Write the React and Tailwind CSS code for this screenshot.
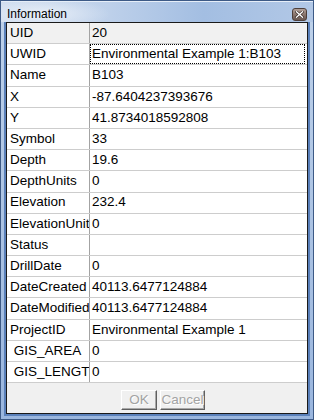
import React from "react";

const rows = [
  ["UID", "20"],
  ["UWID", "Environmental Example 1:B103"],
  ["Name", "B103"],
  ["X", "-87.6404237393676"],
  ["Y", "41.8734018592808"],
  ["Symbol", "33"],
  ["Depth", "19.6"],
  ["DepthUnits", "0"],
  ["Elevation", "232.4"],
  ["ElevationUnit", "0"],
  ["Status", ""],
  ["DrillDate", "0"],
  ["DateCreated", "40113.6477124884"],
  ["DateModified", "40113.6477124884"],
  ["ProjectID", "Environmental Example 1"],
  [" GIS_AREA", "0"],
  [" GIS_LENGT", "0"],
];

function CloseButton() {
  return (
    <div className="w-[15px] h-[13px] rounded-[3px] border border-[#4e3f3a] bg-[linear-gradient(180deg,#b3a199_0%,#8a766e_50%,#6a5852_100%)] flex items-center justify-center">
      <svg width="9" height="7" viewBox="0 0 9 7">
        <path d="M1.5 0.8 L7.5 6.2 M7.5 0.8 L1.5 6.2" stroke="#3a2c28" strokeWidth="2.6" strokeLinecap="square" />
        <path d="M1.5 0.8 L7.5 6.2 M7.5 0.8 L1.5 6.2" stroke="#ffffff" strokeWidth="1.4" strokeLinecap="square" />
      </svg>
    </div>
  );
}

function Btn({ label, w }) {
  return (
    <div
      className={`${w} h-[20px] border-t border-l border-t-white border-l-white border-r border-b border-r-[#5f5f5f] border-b-[#5f5f5f] shadow-[inset_-1px_-1px_0_#a8a8a8] flex items-center justify-center text-[13.5px] text-[#a3a3a3] [text-shadow:1px_1px_0_#ffffff]`}
    >
      {label}
    </div>
  );
}

export default function App() {
  return (
    <div className="w-[314px] h-[420px] overflow-hidden border border-[#3d5a86] bg-[linear-gradient(180deg,#bfd2ea_0%,#a9c1e2_60%,#9ab6de_100%)] flex flex-col font-['Liberation_Sans',Arial,sans-serif]">
      <div className="h-[21px] shrink-0 flex items-center justify-between pl-[6px] pr-[6px] bg-[radial-gradient(ellipse_70px_16px_at_40px_12px,#e8eff8_0%,rgba(232,239,248,0)_100%),linear-gradient(90deg,#cfdcee_0%,#bdd0ea_35%,#a3bee2_65%,#b2c8e6_100%)] border-t border-t-[#e6eef8]">
        <span className="text-[12px] leading-none text-black mt-[3px]">Information</span>
        <div className="mt-[4px]">
          <CloseButton />
        </div>
      </div>
      <div className="flex-1 mx-[3px] mb-[3px] border-x-2 border-b-2 border-[#5a80ba] flex flex-col">
        <div className="flex-1 border border-[#1a1a1a] bg-[#f0f0f0] flex flex-col">
          <div className="flex flex-col bg-white">
            {rows.map(([k, v], i) => (
              <div
                key={i}
                className={`flex h-[21.2px] border-b border-[#cdcdcd] text-[13.5px] text-black ${i === 0 ? "bg-[#f1f1f1]" : "bg-white"}`}
              >
                <div className="w-[83px] shrink-0 border-r border-[#a3a3a3] pl-[3px] overflow-hidden whitespace-pre flex items-center">
                  {k}
                </div>
                {i === 1 ? (
                  <div className="flex-1 min-w-0 mr-[2px] border border-dotted border-black pl-[1px] whitespace-pre flex items-center">
                    {v}
                  </div>
                ) : (
                  <div className="flex-1 min-w-0 pl-[2px] whitespace-pre flex items-center">{v}</div>
                )}
              </div>
            ))}
          </div>
          <div className="flex-1 flex items-start pt-[7px] pl-[114px] gap-[3px]">
            <Btn label="OK" w="w-[36px]" />
            <Btn label="Cancel" w="w-[45px]" />
          </div>
        </div>
      </div>
    </div>
  );
}
